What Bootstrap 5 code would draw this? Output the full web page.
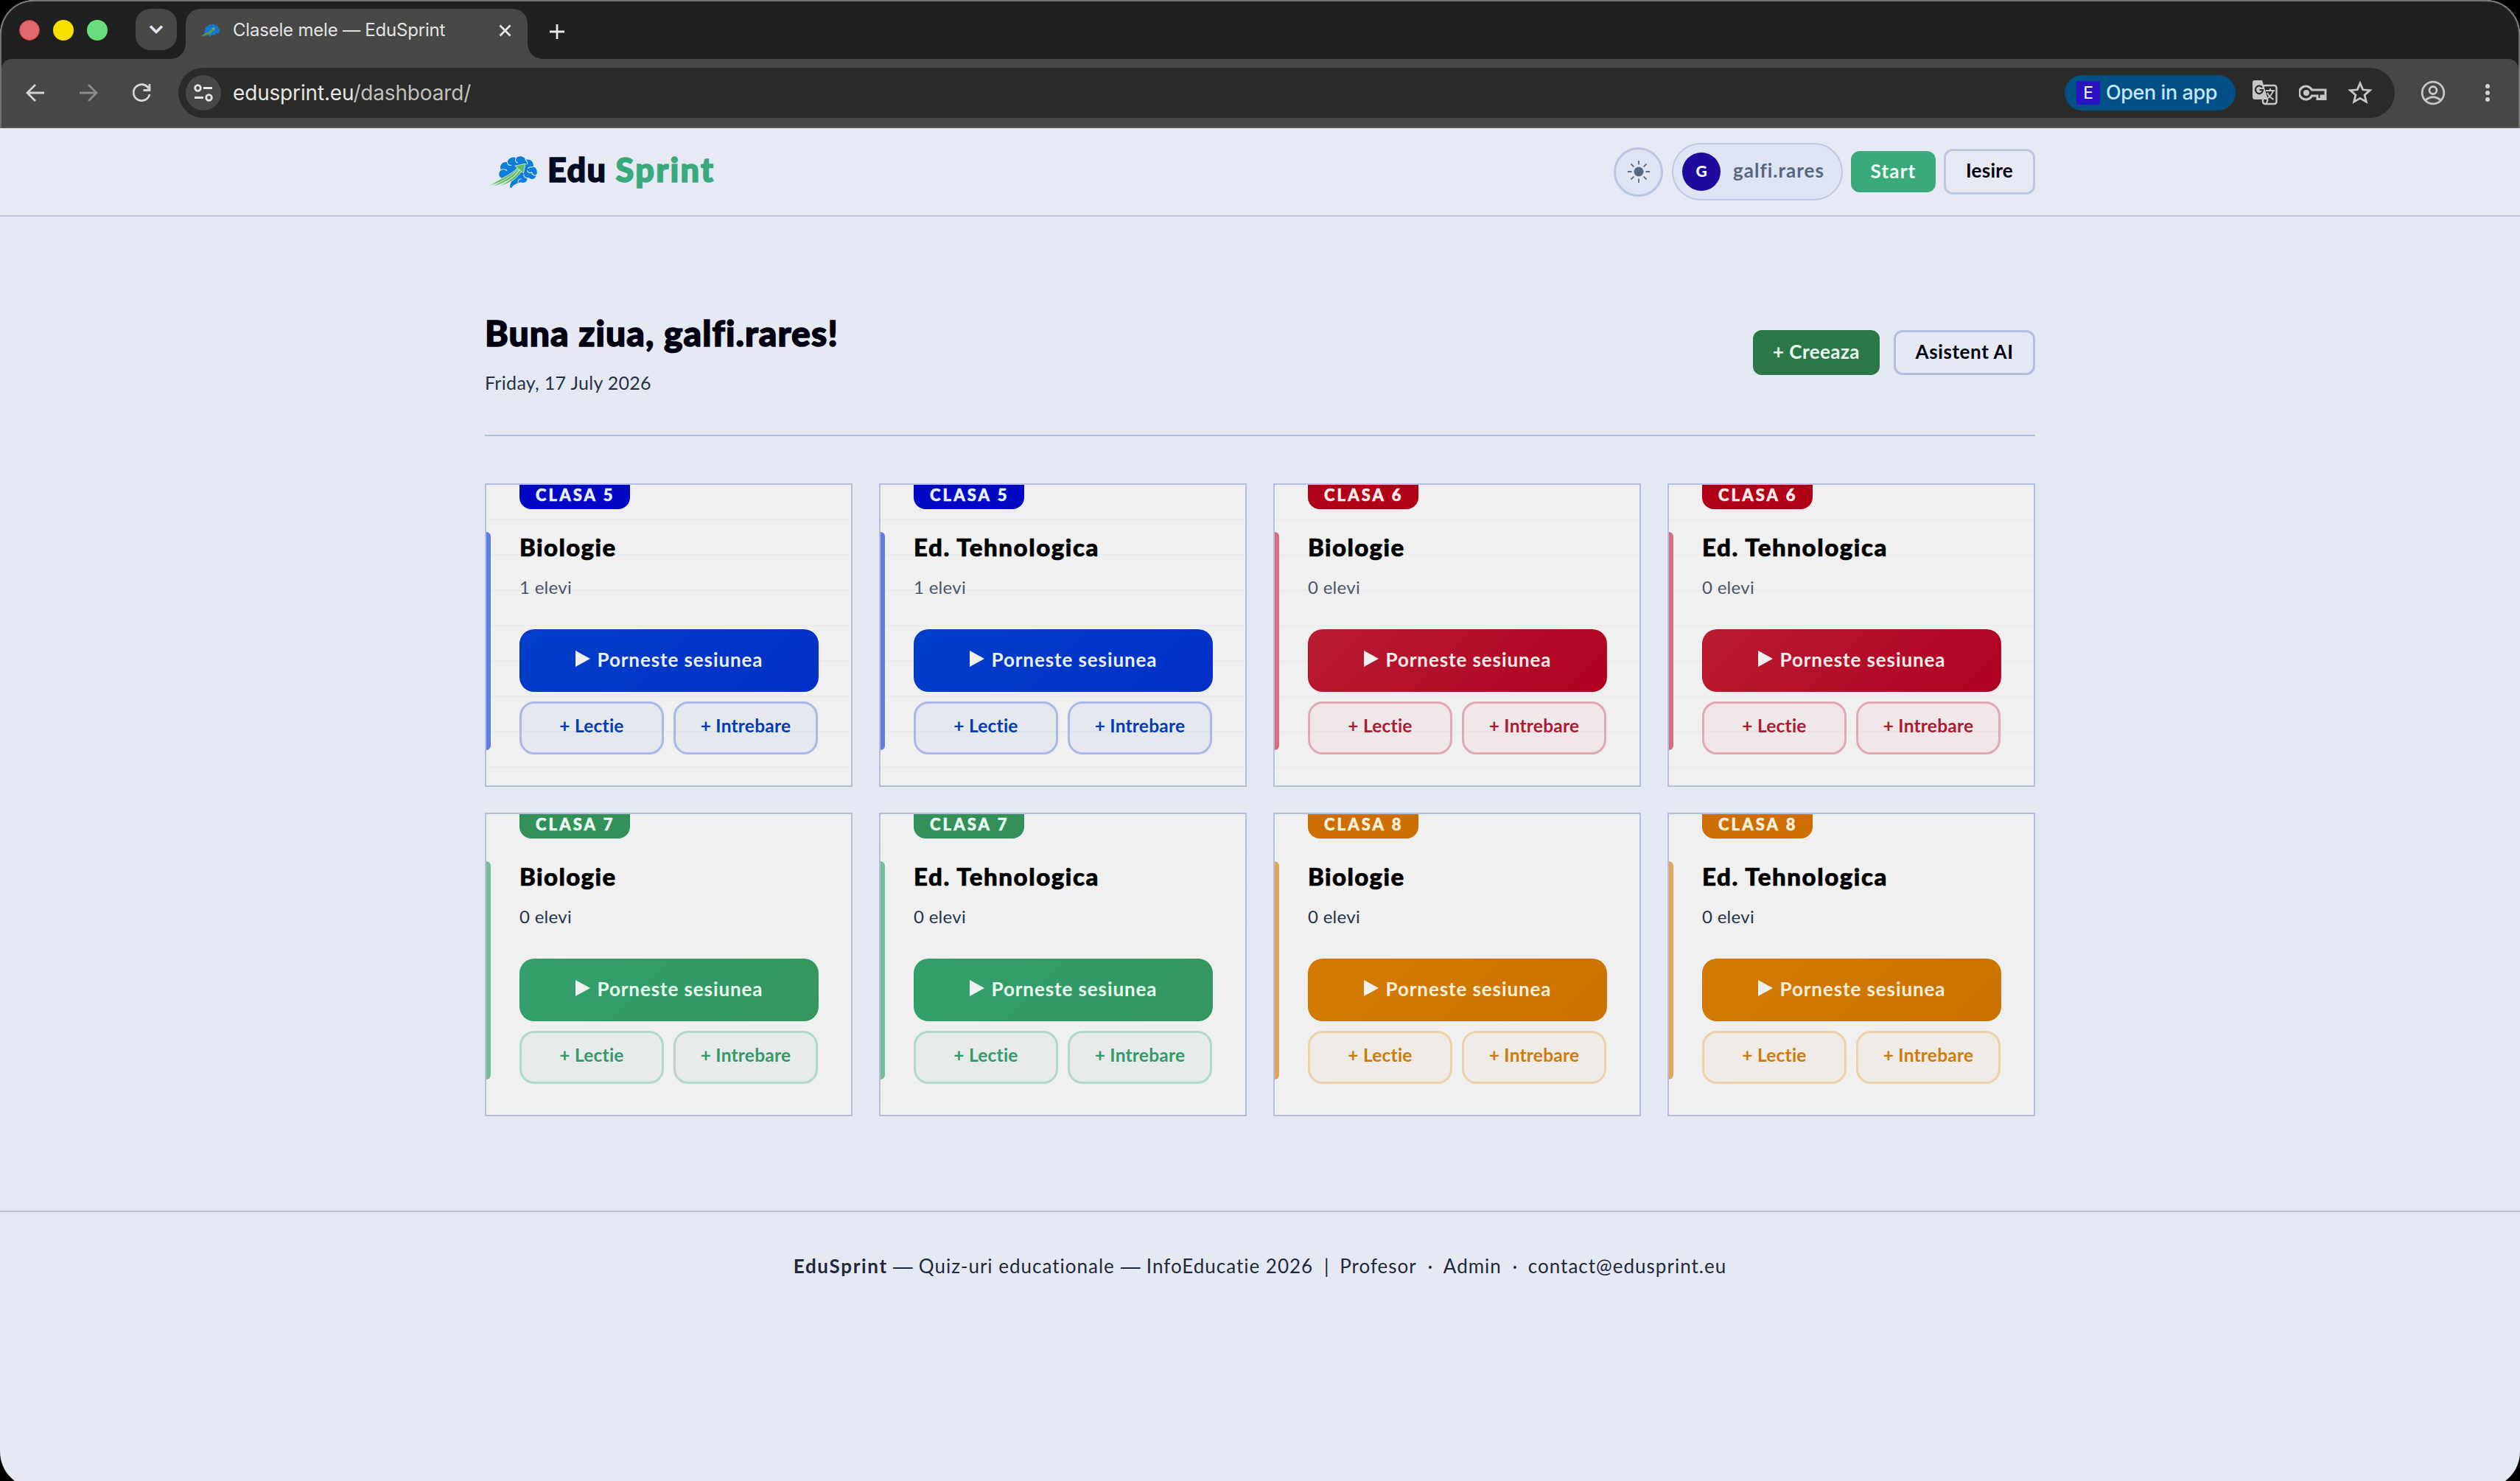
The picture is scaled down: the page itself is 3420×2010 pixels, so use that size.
<!DOCTYPE html>
<html lang="ro">
<head>
<meta charset="utf-8">
<title>Clasele mele — EduSprint</title>
<link href="https://cdn.jsdelivr.net/npm/bootstrap@5.3.0/dist/css/bootstrap.min.css" rel="stylesheet">
<style>
html{background:#000}
body{width:3420px;height:2010px;overflow:hidden;background:#000;font-family:Lato,"Open Sans",sans-serif;font-variant-ligatures:none;color:#000010}
.win{height:2020px;border-radius:46px 46px 50px 50px;overflow:hidden;background:#e5e9f4}
.chrome{height:174px;background:#1e201f;border:2px solid #6f7170;border-bottom:0;border-radius:46px 46px 0 0;font-family:Inter,Roboto,sans-serif;color:#e3e3e3}
.strip{height:78px;padding:10px 0 0 24px}
.dot{width:28px;height:28px;border-radius:50%;margin-right:18px;margin-top:15px}
.dot-red{background:#e0686a;border:1px solid #c03c40}
.dot-yellow{background:#f8e000}
.dot-green{background:#68dc7c;margin-right:0}
.menu-btn{width:56px;height:56px;border-radius:20px;background:#474745;margin-left:38px}
.tab{width:464px;height:68px;margin-left:12px;padding:0 18px 10px 19px;background:#474745;border-radius:20px 20px 0 0;position:relative}
.tab::before,.tab::after{content:"";position:absolute;bottom:0;width:20px;height:20px}
.tab::before{left:-20px;background:radial-gradient(circle at 0 0,transparent 19.5px,#474745 20px)}
.tab::after{right:-20px;background:radial-gradient(circle at 100% 0,transparent 19.5px,#474745 20px)}
.tab-title{font-size:24px;line-height:32px;margin-left:17px;letter-spacing:-.2px}
.new-tab{margin:20px 0 0 29px}
.toolbar{height:94px;background:#474745;border-radius:14px 14px 0 0;border-bottom:2px solid #555554;padding:0 30px}
.nav-ico{margin-right:40px}
.omni{width:3008px;height:68px;border-radius:34px;background:#2a2a28;padding:0 30px 0 10px;margin-left:-6px}
.site{width:48px;height:48px;border-radius:50%;background:#474745}
.url{font-size:28px;line-height:40px;margin-left:16px;color:#e6e6e4;letter-spacing:-.17px}
.url i{font-style:normal;color:#c0c0be}
.openapp{width:232px;height:48px;border-radius:24px;background:#005086;color:#c6e5ff;font-size:27px;font-weight:500;padding-left:16px;letter-spacing:-.42px}
.openapp b{width:32px;height:32px;line-height:32px;background:#2a13c0;color:#fff;font-weight:400;font-size:23px;text-align:center;margin-right:8px}
.ico-gap{margin-left:28px}
.top{height:120px;background:#e7eaf4;border-bottom:2px solid #bcc6e2}
.wrap{width:2104px;margin:0 auto}
.brand{font-size:45px;font-weight:900;line-height:60px;color:#020b24;margin-left:13px;padding-bottom:7px;letter-spacing:1.4px;-webkit-text-stroke:1.6px}
.brand em{font-style:normal;color:#3aaa7c;letter-spacing:2.3px}
.sun{width:67px;height:67px;border-radius:50%;border:3px solid #bcc7e2;background:#dfe5f5}
.user{width:232px;height:78px;border-radius:39px;border:2px solid #bfc9e4;background:#dfe5f5;padding-left:12px;margin:0 11px 0 12px;font-size:26px;font-weight:700;color:#56677f}
.user-name{padding-bottom:4px;letter-spacing:1.01px}
.ava{width:52px;height:52px;border-radius:50%;background:#1d0b9c;color:#fff;font-size:21px;font-weight:900;margin-right:17px;padding-bottom:2px}
.act{border-radius:12px;font-size:26px;font-weight:700;line-height:1;padding:0 0 3px;display:flex;align-items:center;justify-content:center;white-space:nowrap}
.act-start{width:115px;height:56px;background:#3aaa7c;color:#effff6;margin-right:11px;letter-spacing:1.2px}
.act-line{border:3px solid #b5c0df;color:#000010}
.act-out{width:124px;height:62px;border-color:#bcc7e2;letter-spacing:.26px;padding-bottom:4px}
.act-new{width:172px;height:61px;background:#2b7748;color:#ecfff0;margin-right:19px;letter-spacing:.45px}
.act-ai{width:192px;height:61px;letter-spacing:.6px}
.hello{height:298px;padding-top:128px;border-bottom:2px solid #b2bedd}
.hello h1{font-size:48px;font-weight:900;line-height:60px;margin:0;letter-spacing:1.08px;-webkit-text-stroke:1.5px}
.hello p{font-size:25px;line-height:36px;margin:19px 0 0;color:#263247;letter-spacing:.31px}
.hello-acts{padding-top:26px}
.classes{display:grid;grid-template-columns:repeat(4,499px);gap:35px 36px;padding-top:64px;height:1051px;align-content:start}
.klass{height:412px;border:2px solid #b2bfdd;padding:0 45px;position:relative;background:repeating-linear-gradient(transparent 0 46px,var(--ln) 46px 48px),#f0f0f0;overflow:hidden}
.klass::before{content:"";position:absolute;left:0;top:64px;width:6px;height:296px;border-radius:0 6px 6px 0;background:var(--bar)}
.pill{width:150px;height:33px;border-radius:0 0 16px 16px;background:var(--bd);color:var(--on);font-size:22px;font-weight:900;line-height:27px;padding-left:22px;letter-spacing:3.1px;white-space:nowrap;-webkit-text-stroke:.5px}
.klass h2{font-size:33px;font-weight:900;line-height:40px;margin:31px 0 0;color:#000;letter-spacing:1.4px;-webkit-text-stroke:.7px}
.klass h2.tech{letter-spacing:1.57px}
.klass p{font-size:24px;line-height:30px;margin:20px 0 0;color:var(--mt);letter-spacing:.29px}
.go{width:406px;height:85px;border-radius:20px;margin-top:42px;background:linear-gradient(135deg,var(--g1),var(--g2));color:var(--on);letter-spacing:.9px}
.go svg{margin:0 10px 2px 0;color:#f0f0f0}
.duo{gap:13px;margin-top:13px}
.mini{flex:1;height:72px;border:3px solid var(--mb);border-radius:20px;background:var(--mg);color:var(--tx);font-size:24.5px;letter-spacing:.22px;padding-bottom:5px}
.c5{--bd:#0008c4;--g1:#003ec8;--g2:#002fc8;--mb:#aab9ea;--mg:rgba(0,60,200,.045);--tx:#003cb4;--bar:#5f7de0;--ln:rgba(0,60,220,.025);--mt:#4b5568;--on:#eaf0ff}
.c6{--bd:#b00016;--g1:#b81c32;--g2:#b00020;--mb:#e0a9b3;--mg:rgba(220,20,50,.04);--tx:#ac1a33;--bar:#d66f7d;--ln:rgba(220,20,50,.025);--mt:#4b5568;--on:#ffebec}
.c7{--bd:#339059;--g1:#33a16d;--g2:#33965d;--mb:#b2dac8;--mg:rgba(40,160,110,.045);--tx:#36996a;--bar:#74bf9a;--ln:rgba(40,160,110,.015);--mt:#263449;--on:#eafff2}
.c8{--bd:#cc6e00;--g1:#d37b00;--g2:#cc7200;--mb:#edd1a8;--mg:rgba(240,150,20,.045);--tx:#cc7c0b;--bar:#e2a55a;--ln:rgba(220,140,20,.015);--mt:#263449;--on:#fff0dc}
.foot{height:375px;border-top:2px solid #b5bedc;padding-top:53px;font-size:26px;line-height:40px;color:#1e293b;letter-spacing:1px}
.foot span{white-space:nowrap}
.foot b{width:127px;letter-spacing:1.65px}
.foot .dash{width:29px;margin:0 7px;font-family:"Open Sans",sans-serif;font-size:29px;letter-spacing:0}
.foot .sep{width:36px;text-align:center;letter-spacing:0}
</style>
</head>
<body>
<svg width="0" height="0" class="position-absolute">
<symbol id="brain" viewBox="0 0 205 140">
<path fill="#0b7ddb" d="M48 88C44 76 48 66 54 62C46 46 58 26 80 30C84 12 102 6 116 12C126 2 150 4 154 20C172 14 190 28 186 48C200 52 206 70 198 82C196 98 180 104 170 94C168 92 164 92 160 94C164 108 150 118 138 112C124 112 112 120 104 126L96 135C92 136 90 130 91 124L98 104L60 98Z"/>
<path fill="none" stroke="var(--gap,#e7eaf4)" stroke-width="3.5" stroke-linecap="round" d="M54 62C62 56 72 58 78 64M80 30C80 38 86 44 96 42M116 12C110 20 114 30 122 32M154 20C162 26 164 32 160 38M186 48C178 50 168 48 164 54M198 82C192 86 182 82 180 72C170 76 162 70 162 64M160 94C150 94 146 86 148 80M124 112C122 104 128 98 136 98"/>
<g fill="#62bd63" stroke="var(--gap,#e7eaf4)" stroke-width="2.5"><path d="M154 36L111 45L121 53C94 84 52 94 4 128C40 114 72 106 100 84L128 60L134 66L146 74Z"/>
<path d="M124 56C98 90 62 104 18 129C58 120 92 102 112 84L130 62ZM128 60C110 92 80 110 44 129C88 118 118 98 137 68Z"/></g>
</symbol>
<symbol id="tri" viewBox="0 0 20 22"><path fill="currentColor" d="M0 0L20 11L0 22Z"/></symbol>
</svg>
<div class="win">
<div class="chrome">
<div class="strip d-flex align-items-start">
<span class="dot dot-red"></span><span class="dot dot-yellow"></span><span class="dot dot-green"></span>
<span class="menu-btn d-flex align-items-center justify-content-center"><svg width="20" height="14" viewBox="0 0 20 14" fill="none" stroke="#dfe3f0" stroke-width="3.6"><path d="M2 2.5L10 10.5L18 2.5"/></svg></span>
<div class="tab d-flex align-items-center"><svg width="28" height="21" style="--gap:#474745"><use href="#brain"/></svg><span class="tab-title text-nowrap">Clasele mele — EduSprint</span>
<svg class="ms-auto me-1" width="17" height="17" viewBox="0 0 17 17" stroke="#e6e6e6" stroke-width="2.8"><path d="M1.5 1.5L15.5 15.5M15.5 1.5L1.5 15.5"/></svg></div>
<svg class="new-tab" width="22" height="22" viewBox="0 0 22 22" stroke="#e6e6e6" stroke-width="2.8"><path d="M1 11H21M11 1V21"/></svg>
</div>
<div class="toolbar d-flex align-items-center">
<svg class="nav-ico" width="32" height="32" viewBox="0 0 32 32" fill="none" stroke="#d4d4d2" stroke-width="2.8"><path d="M28 16H6M16 5L5 16L16 27"/></svg>
<svg class="nav-ico" width="32" height="32" viewBox="0 0 32 32" fill="none" stroke="#8b8b89" stroke-width="2.8"><path d="M4 16H26M16 5L27 16L16 27"/></svg>
<svg class="nav-ico" width="32" height="32" viewBox="0 0 32 32" fill="none" stroke="#d4d4d2" stroke-width="2.8"><path d="M26 10.5A11 11 0 1 0 27 18M27 4V12.5H18.5"/></svg>
<div class="omni d-flex align-items-center">
<span class="site d-flex align-items-center justify-content-center"><svg width="26" height="24" viewBox="0 0 26 24" fill="none" stroke="#e6e6e4" stroke-width="2.8"><circle cx="5.5" cy="5.5" r="3.8"/><path d="M13 5.5H25M1 18.5H13"/><circle cx="20.5" cy="18.5" r="3.8"/></svg></span>
<span class="url">edusprint.eu<i>/dashboard/</i></span>
<span class="openapp ms-auto d-flex align-items-center text-nowrap"><b>E</b><span>Open in app</span></span>
<svg style="margin-left:22px" width="36" height="36" viewBox="0 0 36 36"><rect x="15" y="8" width="18.5" height="25" rx="3" fill="none" stroke="#c6c6c4" stroke-width="2.5"/><path fill="#c6c6c4" d="M4 1H14L22 27H4Q1 27 1 24V4Q1 1 4 1Z"/><path fill="none" stroke="#2a2a28" stroke-width="2.2" d="M14 10.5A5 5.3 0 1 0 15 14H10.5"/><path fill="none" stroke="#c6c6c4" stroke-width="2" d="M19 15H31M25 12V15M29 15Q27 22 19.5 27M21 18Q24 24 29.5 27M19 34L22 27"/></svg>
<svg class="ico-gap" width="38" height="24" viewBox="0 0 38 24" fill="none" stroke="#c6c6c4" stroke-width="3"><path d="M17.5 8A9 9 0 1 0 17.5 16H25V20.5H30V16H33V20.5H36V8Z"/><circle cx="10" cy="12" r="4" fill="#c6c6c4" stroke="none"/></svg>
<svg class="ico-gap" width="34" height="34" viewBox="0 0 34 34" fill="none" stroke="#c6c6c4" stroke-width="2.8"><path d="M17 4L20.8 12.8L30.3 13.6L23.1 19.9L25.3 29.2L17 24.3L8.7 29.2L10.9 19.9L3.7 13.6L13.2 12.8Z"/></svg>
</div>
<svg style="margin-left:35px" width="34" height="34" viewBox="0 0 34 34" fill="none" stroke="#c6c6c4" stroke-width="2.8"><circle cx="17" cy="17" r="14.8"/><circle cx="17" cy="13.5" r="5"/><path d="M6.5 27Q17 18.5 27.5 27"/></svg>
<svg class="ms-auto me-2" width="8" height="26" viewBox="0 0 8 26" fill="#d4d4d2"><circle cx="4" cy="4" r="3"/><circle cx="4" cy="13" r="3"/><circle cx="4" cy="22" r="3"/></svg>
</div>
</div>

<header class="top"><div class="wrap h-100 d-flex align-items-center">
<svg style="margin-left:4px" width="68" height="47"><use href="#brain"/></svg>
<span class="brand text-nowrap">Edu <em>Sprint</em></span>
<span class="sun ms-auto d-flex align-items-center justify-content-center"><svg width="32" height="32" viewBox="-16 -16 32 32" stroke="#5d6d86" stroke-width="1.8"><circle r="6.5" fill="#566781" stroke="none"/><path d="M0 -9.5V-15M0 9.5V15M9.5 0H15M-9.5 0H-15M6.7 6.7L10.6 10.6M-6.7 6.7L-10.6 10.6M6.7 -6.7L10.6 -10.6M-6.7 -6.7L-10.6 -10.6"/></svg></span>
<span class="user d-flex align-items-center"><span class="ava d-flex align-items-center justify-content-center">G</span><span class="user-name">galfi.rares</span></span>
<a class="btn act act-start">Start</a><a class="btn act act-line act-out">Iesire</a>
</div></header>

<main class="wrap">
<section class="hello d-flex justify-content-between">
<div><h1>Buna ziua, galfi.rares!</h1><p>Friday, 17 July 2026</p></div>
<div class="hello-acts d-flex"><a class="btn act act-new">+ Creeaza</a><a class="btn act act-line act-ai">Asistent AI</a></div>
</section>
<section class="classes">
<article class="klass c5"><div class="pill">CLASA 5</div><h2>Biologie</h2><p>1 elevi</p><a class="btn act go"><svg width="20" height="22"><use href="#tri"/></svg>Porneste sesiunea</a><div class="duo d-flex"><a class="btn act mini">+ Lectie</a><a class="btn act mini">+ Intrebare</a></div></article>
<article class="klass c5"><div class="pill">CLASA 5</div><h2 class="tech">Ed. Tehnologica</h2><p>1 elevi</p><a class="btn act go"><svg width="20" height="22"><use href="#tri"/></svg>Porneste sesiunea</a><div class="duo d-flex"><a class="btn act mini">+ Lectie</a><a class="btn act mini">+ Intrebare</a></div></article>
<article class="klass c6"><div class="pill">CLASA 6</div><h2>Biologie</h2><p>0 elevi</p><a class="btn act go"><svg width="20" height="22"><use href="#tri"/></svg>Porneste sesiunea</a><div class="duo d-flex"><a class="btn act mini">+ Lectie</a><a class="btn act mini">+ Intrebare</a></div></article>
<article class="klass c6"><div class="pill">CLASA 6</div><h2 class="tech">Ed. Tehnologica</h2><p>0 elevi</p><a class="btn act go"><svg width="20" height="22"><use href="#tri"/></svg>Porneste sesiunea</a><div class="duo d-flex"><a class="btn act mini">+ Lectie</a><a class="btn act mini">+ Intrebare</a></div></article>
<article class="klass c7"><div class="pill">CLASA 7</div><h2>Biologie</h2><p>0 elevi</p><a class="btn act go"><svg width="20" height="22"><use href="#tri"/></svg>Porneste sesiunea</a><div class="duo d-flex"><a class="btn act mini">+ Lectie</a><a class="btn act mini">+ Intrebare</a></div></article>
<article class="klass c7"><div class="pill">CLASA 7</div><h2 class="tech">Ed. Tehnologica</h2><p>0 elevi</p><a class="btn act go"><svg width="20" height="22"><use href="#tri"/></svg>Porneste sesiunea</a><div class="duo d-flex"><a class="btn act mini">+ Lectie</a><a class="btn act mini">+ Intrebare</a></div></article>
<article class="klass c8"><div class="pill">CLASA 8</div><h2>Biologie</h2><p>0 elevi</p><a class="btn act go"><svg width="20" height="22"><use href="#tri"/></svg>Porneste sesiunea</a><div class="duo d-flex"><a class="btn act mini">+ Lectie</a><a class="btn act mini">+ Intrebare</a></div></article>
<article class="klass c8"><div class="pill">CLASA 8</div><h2 class="tech">Ed. Tehnologica</h2><p>0 elevi</p><a class="btn act go"><svg width="20" height="22"><use href="#tri"/></svg>Porneste sesiunea</a><div class="duo d-flex"><a class="btn act mini">+ Lectie</a><a class="btn act mini">+ Intrebare</a></div></article>
</section>
</main>
<footer class="foot d-flex justify-content-center align-items-start"><b>EduSprint</b><span class="dash">—</span><span>Quiz-uri educationale</span><span class="dash">—</span><span>InfoEducatie 2026</span><span class="sep">|</span><span>Profesor</span><span class="sep">·</span><span>Admin</span><span class="sep">·</span><span>contact@edusprint.eu</span></footer>
</div>
<script src="https://cdn.jsdelivr.net/npm/bootstrap@5.3.0/dist/js/bootstrap.bundle.min.js"></script>
</body>
</html>
